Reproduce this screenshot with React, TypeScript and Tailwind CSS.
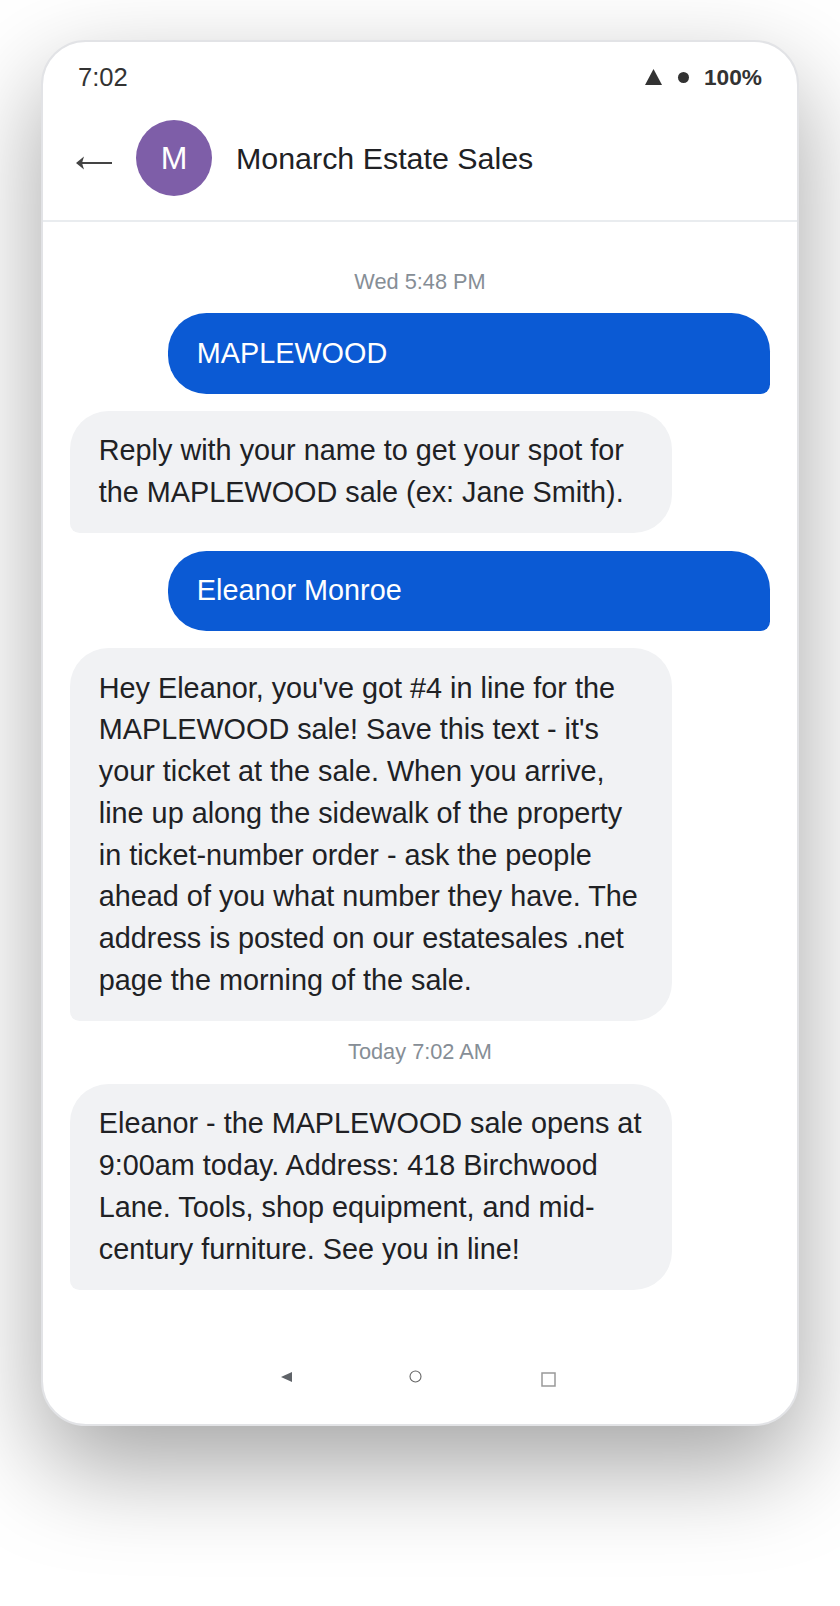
const font = "font-['Liberation_Sans',Arial,sans-serif]";

function Outgoing({ children }: { children: string }) {
  return (
    <div className="ml-[98px] w-[602px] rounded-[38.4px] rounded-br-[9.6px] bg-[#0b5ad4] px-[28.8px] py-[19.2px] text-[28.8px] leading-[41.76px] text-white">
      {children}
    </div>
  );
}

function Incoming({ lines }: { lines: string[] }) {
  return (
    <div className="w-[602px] rounded-[38.4px] rounded-bl-[9.6px] bg-[#f1f2f4] px-[28.8px] py-[19.2px] text-[28.8px] leading-[41.76px] text-[#202124]">
      {lines.map((l) => (
        <div key={l} className="whitespace-nowrap">{l}</div>
      ))}
    </div>
  );
}

function Stamp({ children }: { children: string }) {
  return <div className="text-center text-[21.76px] leading-[28.2px] text-[#868e96]">{children}</div>;
}

export default function App() {
  return (
    <div className={`${font} h-[1606px] w-[840px] overflow-hidden bg-white pl-[41px] pt-[40px]`}>
      <div className="flex h-[1386px] w-[758px] flex-col overflow-hidden rounded-[44.8px] border-2 border-[#e2e3e6] bg-white shadow-[0_40px_100px_rgba(0,0,0,0.36)]">
        <div className="flex h-[51px] items-end justify-between px-[35px] text-[#333333]">
          <span className="text-[25.6px] leading-[32px]">7:02</span>
          <div className="flex items-center">
            <svg width="17" height="16" viewBox="0 0 17 16" className="mr-[16px]"><polygon points="8.5,0 17,16 0,16" fill="#333333" /></svg>
            <span className="mr-[15px] h-[11px] w-[11px] rounded-full bg-[#333333]" />
            <span className="text-[22.7px] font-bold leading-[32px]">100%</span>
          </div>
        </div>
        <div className="flex h-[129px] items-center border-b-2 border-[#e9ecef] pl-[33px] pt-[3px]">
          <svg width="36" height="20" viewBox="0 0 36 20" className="mr-[24px] mt-[10px]">
            <path d="M4 10 H36" stroke="#444444" strokeWidth="1.8" fill="none" />
            <path d="M0 10 L8 3.5 L6 10 L8 16.5 Z" fill="#444444" />
          </svg>
          <div className="flex h-[76px] w-[76px] items-center justify-center rounded-full bg-[#7e5ea8] text-[32px] text-white">M</div>
          <span className="ml-[24px] mt-[2px] text-[30.4px] text-[#202124]">Monarch Estate Sales</span>
        </div>
        <div className="flex flex-1 flex-col gap-[17.6px] px-[27px] pt-[45.6px]">
          <Stamp>Wed 5:48 PM</Stamp>
          <Outgoing>MAPLEWOOD</Outgoing>
          <Incoming lines={["Reply with your name to get your spot for", "the MAPLEWOOD sale (ex: Jane Smith)."]} />
          <Outgoing>Eleanor Monroe</Outgoing>
          <Incoming lines={["Hey Eleanor, you've got #4 in line for the", "MAPLEWOOD sale! Save this text - it's", "your ticket at the sale. When you arrive,", "line up along the sidewalk of the property", "in ticket-number order - ask the people", "ahead of you what number they have. The", "address is posted on our estatesales .net", "page the morning of the sale."]} />
          <Stamp>Today 7:02 AM</Stamp>
          <Incoming lines={["Eleanor - the MAPLEWOOD sale opens at", "9:00am today. Address: 418 Birchwood", "Lane. Tools, shop equipment, and mid-", "century furniture. See you in line!"]} />
        </div>
        <div className="flex h-[54px] items-start pl-[238px]">
          <svg width="12" height="11" viewBox="0 0 12 11" className="mr-[116px] mt-[2px]"><polygon points="11,0 11,10 0,5" fill="#5f6368" /></svg>
          <svg width="13" height="13" viewBox="0 0 13 13" className="mr-[119px]" fill="none" stroke="#666666" strokeWidth="1.1"><circle cx="6.5" cy="6.5" r="5.5" /></svg>
          <svg width="15" height="15" viewBox="0 0 15 15" className="mt-[2px]" fill="none" stroke="#999999" strokeWidth="1.5"><rect x="1" y="1" width="13" height="13" /></svg>
        </div>
      </div>
    </div>
  );
}
